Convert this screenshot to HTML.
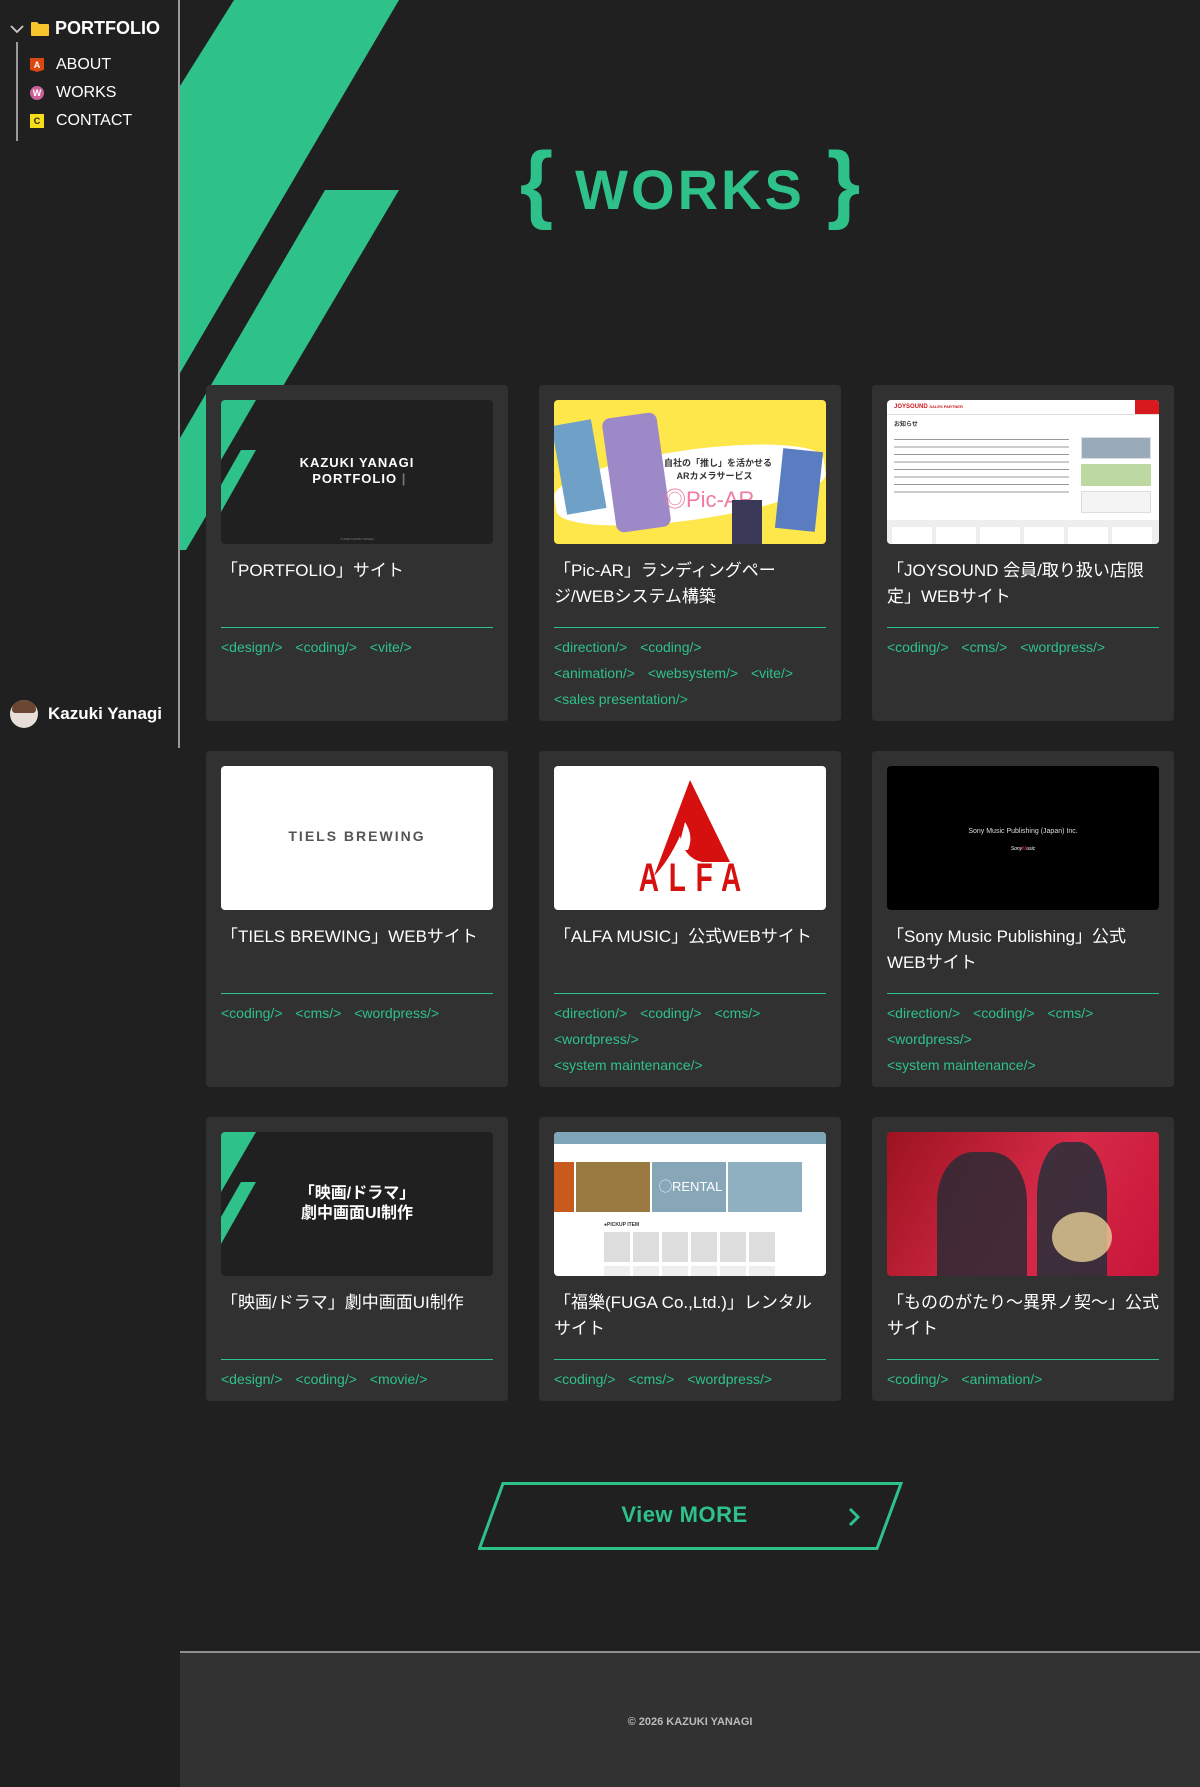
<!DOCTYPE html>
<html><head><meta charset="utf-8">
<style>
*{margin:0;padding:0;box-sizing:border-box}
html,body{width:1200px;height:1787px;background:#202020;overflow:hidden}
body{position:relative;font-family:"Liberation Sans","Noto Sans CJK JP",sans-serif;color:#fff}
.side{position:absolute;left:0;top:0;width:180px;height:748px;border-right:2px solid #9a9a9a;background:#202020;z-index:3}
.side .root{position:absolute;left:10px;top:18px;font-size:18px;font-weight:bold;display:flex;align-items:center}
.side .vl{position:absolute;left:16px;top:42px;width:2px;height:99px;background:#9a9a9a}
.side .it{position:absolute;left:30px;font-size:16px;display:flex;align-items:center}
.side .it i{display:inline-block;width:14px;height:14px;margin-right:12px;font-style:normal;font-size:9px;font-weight:bold;text-align:center;line-height:14px}
.me{position:absolute;left:10px;top:700px;display:flex;align-items:center;font-weight:bold;font-size:17px;z-index:4}
.me .av{width:28px;height:28px;border-radius:50%;background:#e8e0d8;margin-right:10px;position:relative;overflow:hidden}
.me .av:before{content:"";position:absolute;left:2px;top:0;width:24px;height:13px;background:#6a4530;border-radius:12px 12px 4px 4px}
.stripes{position:absolute;left:180px;top:0;width:1020px;height:700px;z-index:1}
h1{position:absolute;left:180px;width:1020px;top:140px;text-align:center;color:#2ec28a;font-weight:bold;z-index:2}
h1 .b{font-size:86px;font-weight:bold;vertical-align:middle;position:relative;top:-6px}
h1 .w{font-size:56px;letter-spacing:3px;vertical-align:middle;margin:0 22px}
.grid{position:absolute;left:206px;top:385px;width:968px;display:grid;grid-template-columns:302px 302px 302px;column-gap:31px;row-gap:30px;z-index:2}
.card{background:#313131;border-radius:4px;padding:15px 15px 9px}
.th{height:144px;border-radius:4px;overflow:hidden;position:relative}
.t{margin-top:14px;font-size:17px;line-height:26px;height:52px;color:#fff}
.ln{height:1px;background:#2ec28a;margin-top:17px}
.tg{padding-top:6px;font-size:14px;line-height:26px;color:#2ec28a}
.tg span{margin-right:9px;white-space:nowrap}
.btn{position:absolute;left:478px;top:1482px;width:425px;height:68px;z-index:2}
.btn .tx{position:absolute;left:0;width:425px;top:20px;text-align:center;color:#2ec28a;font-size:22px;font-weight:bold;letter-spacing:.5px;padding-right:12px}
.foot{position:absolute;left:180px;top:1651px;width:1020px;height:136px;background:#323232;border-top:2px solid #8f8f8f;text-align:center;font-size:11px;font-weight:bold;color:#bbb;line-height:136px}
.foot span{position:relative;top:1px}
</style></head><body>
<div class="side">
  <div class="root"><svg width="14" height="10" viewBox="0 0 14 10"><path d="M1 2 L7 8 L13 2" stroke="#ccc" stroke-width="1.8" fill="none"/></svg>
  <svg width="18" height="14" viewBox="0 0 18 14" style="margin:0 6px 0 7px"><path d="M0 1 Q0 0 1 0 H6 L8 2 H17 Q18 2 18 3 V13 Q18 14 17 14 H1 Q0 14 0 13Z" fill="#f8c52c"/></svg>PORTFOLIO</div>
  <div class="vl"></div>
  <div class="it" style="top:56px"><i style="background:#d8480f;color:#fff;clip-path:polygon(0 0,100% 0,100% 85%,50% 100%,0 85%)">A</i>ABOUT</div>
  <div class="it" style="top:84px"><i style="background:#c96198;color:#fff;border-radius:50%">W</i>WORKS</div>
  <div class="it" style="top:112px"><i style="background:#f5de19;color:#222">C</i>CONTACT</div>
</div>
<div class="me"><div class="av"></div>Kazuki Yanagi</div>
<svg class="stripes" viewBox="0 0 1020 700"><polygon points="54,0 219,0 0,373 0,86" fill="#2ec28a"/><polygon points="145,190 219,190 6,550 0,550 0,438" fill="#2ec28a"/></svg>
<h1><span class="b">{</span><span class="w">WORKS</span><span class="b">}</span></h1>
<div class="grid">
 <div class="card"><div class="th" style="background:#202020">
   <svg width="272" height="144" style="position:absolute;left:0;top:0"><polygon points="0,0 35,0 0,60" fill="#2ec28a"/><polygon points="20,50 35,50 0,112 0,85" fill="#2ec28a"/></svg>
   <div style="position:absolute;top:55px;width:100%;text-align:center;font-weight:bold;font-size:13px;line-height:16px;letter-spacing:1px">KAZUKI YANAGI<br>&nbsp;PORTFOLIO <span style="color:#777">|</span></div>
   <div style="position:absolute;bottom:3px;width:100%;text-align:center;font-size:3px;color:#888">© 2026 KAZUKI YANAGI</div></div>
  <div class="t">「PORTFOLIO」サイト</div><div class="ln"></div>
  <div class="tg"><span>&lt;design/&gt;</span> <span>&lt;coding/&gt;</span> <span>&lt;vite/&gt;</span></div></div>
 <div class="card"><div class="th" style="background:#fde74a">
   <div style="position:absolute;left:0;top:50px;width:272px;height:70px;background:#fff;border-radius:50%/40%;transform:rotate(-8deg)"></div>
   <div style="position:absolute;left:5px;top:22px;width:40px;height:90px;background:#6ea0c8;transform:rotate(-10deg)"></div>
   <div style="position:absolute;left:55px;top:15px;width:55px;height:115px;background:#9d88c8;border-radius:8px;transform:rotate(-8deg)"></div>
   <div style="position:absolute;left:110px;top:56px;font-size:9px;color:#333;font-weight:bold">自社の「推し」を活かせる<br>&nbsp;&nbsp;&nbsp;&nbsp;&nbsp;ARカメラサービス</div>
   <div style="position:absolute;left:110px;top:82px;font-size:22px;color:#f07aa0">◎Pic-AR</div>
   <div style="position:absolute;left:225px;top:50px;width:40px;height:80px;background:#5a7cc0;transform:rotate(6deg)"></div>
   <div style="position:absolute;left:178px;top:100px;width:30px;height:44px;background:#3a3a58"></div></div>
  <div class="t">「Pic-AR」ランディングページ/WEBシステム構築</div><div class="ln"></div>
  <div class="tg"><span>&lt;direction/&gt;</span> <span>&lt;coding/&gt;</span><br><span>&lt;animation/&gt;</span> <span>&lt;websystem/&gt;</span> <span>&lt;vite/&gt;</span><br><span>&lt;sales presentation/&gt;</span></div></div>
 <div class="card"><div class="th" style="background:#fff">
   <div style="position:absolute;left:7px;top:4px;font-size:6px;font-weight:bold;color:#d0191e">JOYSOUND <span style="font-size:4px">SALES PARTNER</span></div>
   <div style="position:absolute;right:0;top:0;width:24px;height:14px;background:#d8191e"></div>
   <div style="position:absolute;left:0;top:14px;width:100%;height:1px;background:#ddd"></div>
   <div style="position:absolute;left:7px;top:19px;font-size:6px;color:#333;font-weight:bold">お知らせ</div>
   <div style="position:absolute;left:7px;top:35px;width:175px;height:60px;background:repeating-linear-gradient(#fff 0 4px,#999 4px 5px,#fff 5px 7.5px)"></div>
   <div style="position:absolute;left:194px;top:37px;width:70px;height:22px;background:#9ab;border:1px solid #ddd"></div>
   <div style="position:absolute;left:194px;top:64px;width:70px;height:22px;background:#bdd8a0"></div>
   <div style="position:absolute;left:194px;top:91px;width:70px;height:22px;background:#f4f4f4;border:1px solid #ddd"></div>
   <div style="position:absolute;left:0;top:120px;width:100%;height:24px;background:#eee"></div>
   <div style="position:absolute;left:5px;top:127px;width:262px;height:17px;background:repeating-linear-gradient(90deg,#fff 0 40px,#eee 40px 44px)"></div></div>
  <div class="t">「JOYSOUND 会員/取り扱い店限定」WEBサイト</div><div class="ln"></div>
  <div class="tg"><span>&lt;coding/&gt;</span> <span>&lt;cms/&gt;</span> <span>&lt;wordpress/&gt;</span></div></div>

 <div class="card"><div class="th" style="background:#fff"><div style="position:absolute;top:62px;width:100%;text-align:center;font-size:14px;letter-spacing:2px;color:#555;font-weight:bold">TIELS BREWING</div></div>
  <div class="t">「TIELS BREWING」WEBサイト</div><div class="ln"></div>
  <div class="tg"><span>&lt;coding/&gt;</span> <span>&lt;cms/&gt;</span> <span>&lt;wordpress/&gt;</span></div></div>
 <div class="card"><div class="th" style="background:#fff">
   <svg width="272" height="144" style="position:absolute;left:0;top:0"><path d="M136 14 L176 96 L148 96 Q130 92 126 70 Q114 96 100 110 Z" fill="#d60f0f"/><path d="M131 56 Q140 70 134 84 L124 84Z" fill="#fff"/></svg>
   <div style="position:absolute;top:92px;width:100%;text-align:center;font-size:40px;letter-spacing:14px;color:#d60f0f;font-weight:bold;line-height:40px;transform:scaleX(.7);padding-left:14px">ALFA</div></div>
  <div class="t">「ALFA MUSIC」公式WEBサイト</div><div class="ln"></div>
  <div class="tg"><span>&lt;direction/&gt;</span> <span>&lt;coding/&gt;</span> <span>&lt;cms/&gt;</span><br><span>&lt;wordpress/&gt;</span><br><span>&lt;system maintenance/&gt;</span></div></div>
 <div class="card"><div class="th" style="background:#000"><div style="position:absolute;top:62px;width:100%;text-align:center;font-size:7px;color:#ddd">Sony Music Publishing (Japan) Inc.</div><div style="position:absolute;top:80px;width:100%;text-align:center;font-size:5px;color:#fff;font-style:italic">Sony<span style="color:#d22">M</span>usic</div></div>
  <div class="t">「Sony Music Publishing」公式WEBサイト</div><div class="ln"></div>
  <div class="tg"><span>&lt;direction/&gt;</span> <span>&lt;coding/&gt;</span> <span>&lt;cms/&gt;</span><br><span>&lt;wordpress/&gt;</span><br><span>&lt;system maintenance/&gt;</span></div></div>

 <div class="card"><div class="th" style="background:#202020">
   <svg width="272" height="144" style="position:absolute;left:0;top:0"><polygon points="0,0 35,0 0,60" fill="#2ec28a"/><polygon points="20,50 35,50 0,112 0,85" fill="#2ec28a"/></svg>
   <div style="position:absolute;top:52px;width:100%;text-align:center;font-weight:bold;font-size:16px;line-height:20px">「映画/ドラマ」<br>劇中画面UI制作</div></div>
  <div class="t">「映画/ドラマ」劇中画面UI制作</div><div class="ln"></div>
  <div class="tg"><span>&lt;design/&gt;</span> <span>&lt;coding/&gt;</span> <span>&lt;movie/&gt;</span></div></div>
 <div class="card"><div class="th" style="background:#fff">
   <div style="position:absolute;left:0;top:0;width:100%;height:12px;background:#7fa6b8"></div>
   <div style="position:absolute;left:0;top:30px;width:20px;height:50px;background:#c85a1e"></div>
   <div style="position:absolute;left:22px;top:30px;width:74px;height:50px;background:#9a7a40"></div>
   <div style="position:absolute;left:98px;top:30px;width:74px;height:50px;background:#87a7b8"></div>
   <div style="position:absolute;left:105px;top:44px;font-size:13px;color:#fff">◯RENTAL</div>
   <div style="position:absolute;left:174px;top:30px;width:74px;height:50px;background:#8eb0c0"></div>
   <div style="position:absolute;left:50px;top:90px;font-size:5px;color:#333;font-weight:bold">●PICKUP ITEM</div>
   <div style="position:absolute;left:50px;top:100px;width:172px;height:30px;background:repeating-linear-gradient(90deg,#ddd 0 26px,#fff 26px 29px)"></div>
   <div style="position:absolute;left:50px;top:134px;width:172px;height:10px;background:repeating-linear-gradient(90deg,#eee 0 26px,#fff 26px 29px)"></div></div>
  <div class="t">「福樂(FUGA Co.,Ltd.)」レンタルサイト</div><div class="ln"></div>
  <div class="tg"><span>&lt;coding/&gt;</span> <span>&lt;cms/&gt;</span> <span>&lt;wordpress/&gt;</span></div></div>
 <div class="card"><div class="th" style="background:linear-gradient(120deg,#9c1320,#d62a48 55%,#c8153a)">
   <div style="position:absolute;left:50px;top:20px;width:90px;height:124px;background:#2a2a34;border-radius:40% 40% 0 0;opacity:.85"></div>
   <div style="position:absolute;left:150px;top:10px;width:70px;height:134px;background:#23303a;border-radius:40% 40% 0 0;opacity:.85"></div>
   <div style="position:absolute;left:165px;top:80px;width:60px;height:50px;background:#e6d098;border-radius:50%;opacity:.8"></div></div>
  <div class="t">「もののがたり〜異界ノ契〜」公式サイト</div><div class="ln"></div>
  <div class="tg"><span>&lt;coding/&gt;</span> <span>&lt;animation/&gt;</span></div></div>
</div>
<div class="btn"><svg width="425" height="68" style="position:absolute;left:0;top:0"><polygon points="25,1.5 423,1.5 399,66.5 1.5,66.5" fill="none" stroke="#2ec28a" stroke-width="3"/><path d="M372 27 L380 35 L372 43" stroke="#2ec28a" stroke-width="3" fill="none"/></svg><div class="tx">View MORE</div></div>
<div class="foot"><span>© 2026 KAZUKI YANAGI</span></div>
</body></html>
